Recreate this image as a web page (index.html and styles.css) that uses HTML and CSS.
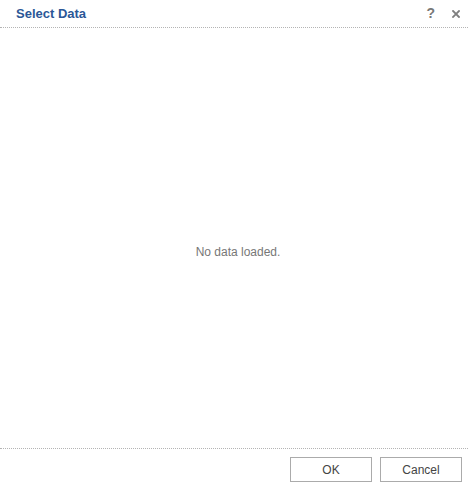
FILE: index.html
```html
<!DOCTYPE html>
<html lang="en">
  <head>
    <meta charset="UTF-8" />
    <title>Select Data</title>
    <link rel="stylesheet" href="styles.css">
  </head>
  <body>
    <div class="dialog">
      <div class="dialog-header">
        <span class="dialog-title">Select Data</span>
        <div class="header-tools">
          <span class="tool help">?</span>
          <svg class="tool close" width="8" height="8" viewBox="0 0 8 8">
            <path d="M1 1 L7 7 M7 1 L1 7" stroke="#7f7f7f" stroke-width="1.8" stroke-linecap="square" />
          </svg>
        </div>
      </div>
      <div class="dialog-body">
        <p class="empty-msg">No data loaded.</p>
      </div>
      <div class="dialog-footer">
        <button class="btn">OK</button>
        <button class="btn">Cancel</button>
      </div>
    </div>
  </body>
</html>
```

FILE: styles.css
```css
body {
  margin: 0;
  font-family: "Liberation Sans", Arial, sans-serif;
  background: #ffffff;
  color: #333;
}

.dialog {
  width: 468px;
  height: 489px;
  display: flex;
  flex-direction: column;
}

.dialog-header {
  height: 27px;
  display: flex;
  align-items: center;
  justify-content: space-between;
  padding: 0 8px 0 16px;
  border-bottom: 1px dotted #b4b4b4;
}

.dialog-title {
  font-size: 13px;
  font-weight: bold;
  color: #2b5797;
  margin-top: -1px;
}

.header-tools {
  display: flex;
  align-items: center;
  gap: 17px;
  margin-top: -1px;
}

.tool {
  color: #787878;
  font-weight: bold;
  cursor: pointer;
}

.help {
  font-size: 14px;
}

.close {
  display: block;
  margin-top: 1px;
}

.dialog-body {
  height: 420px;
  display: flex;
  align-items: center;
  justify-content: center;
  padding: 28px 0 0 8px;
  box-sizing: border-box;
}

.empty-msg {
  margin: 0;
  font-size: 12px;
  color: #777;
}

.dialog-footer {
  border-top: 1px dotted #b4b4b4;
  display: flex;
  justify-content: flex-end;
  gap: 8px;
  padding: 8px 6px 0 0;
}

.btn {
  width: 82px;
  height: 25px;
  background: #ffffff;
  border: 1px solid #ababab;
  font-family: "Liberation Sans", Arial, sans-serif;
  font-size: 12px;
  color: #444;
  cursor: pointer;
}
```
